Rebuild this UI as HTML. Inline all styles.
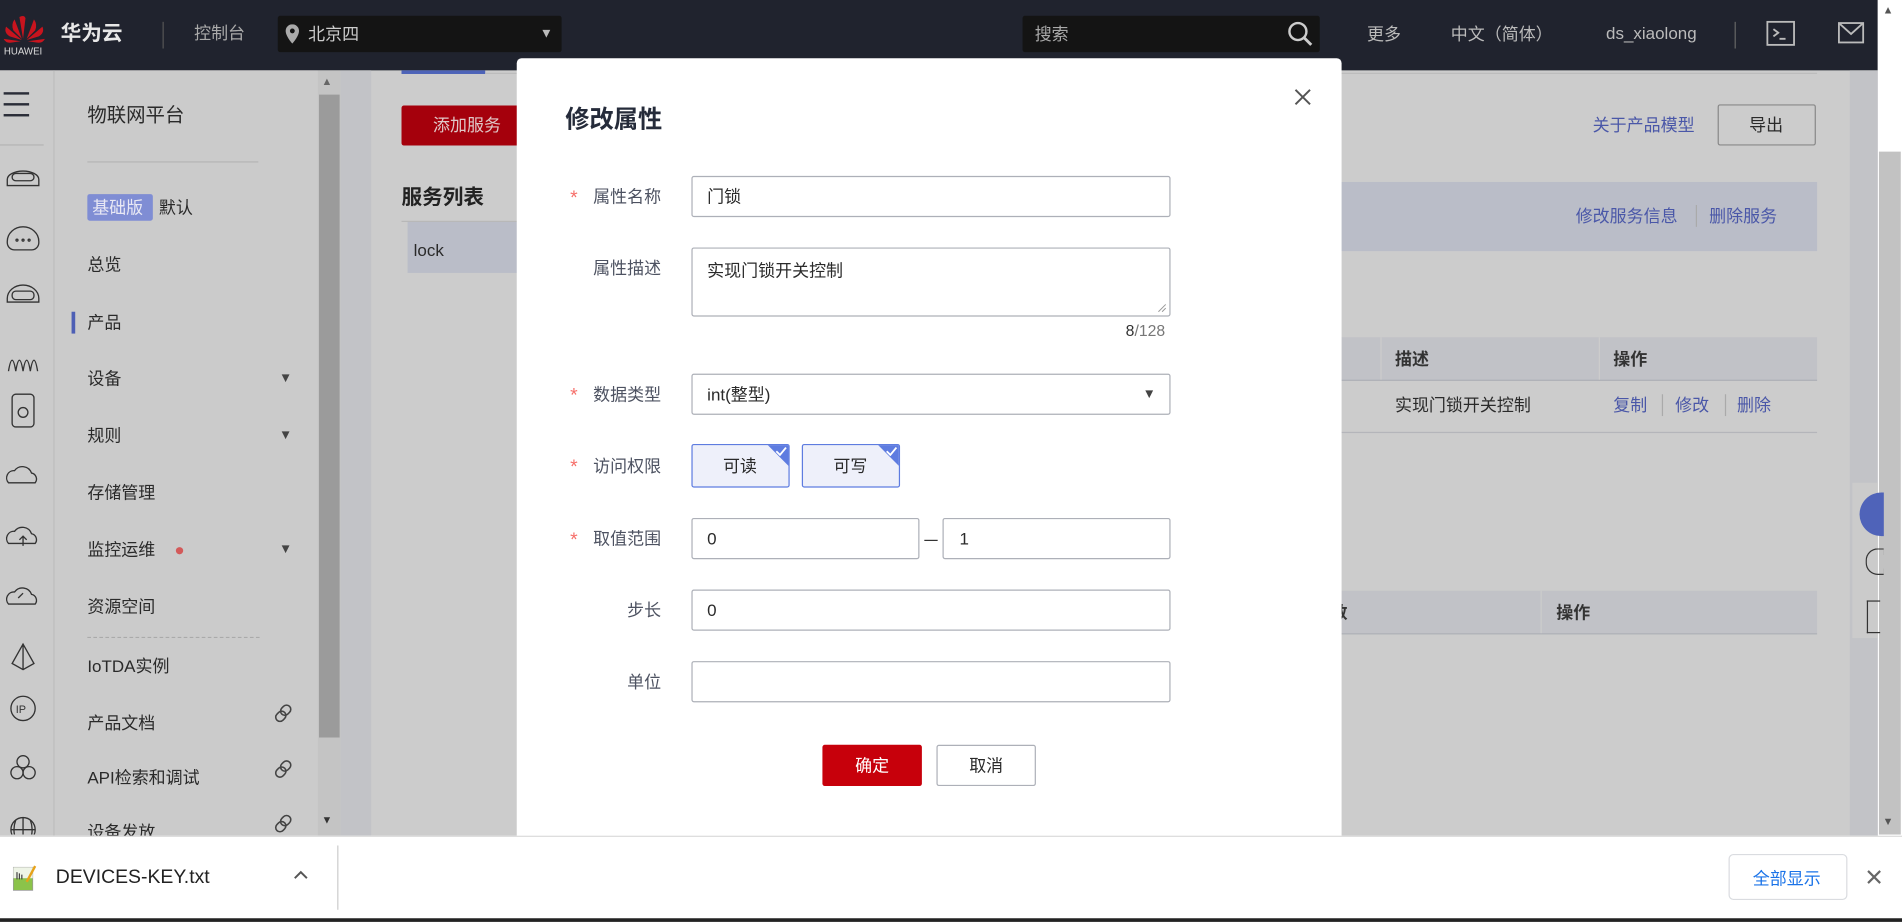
<!DOCTYPE html>
<html><head><meta charset="utf-8"><style>
html,body{margin:0;padding:0;width:1902px;height:921px;overflow:hidden;background:#ccc}
#w{position:absolute;left:0;top:0;width:1568px;height:760px;transform:scale(1.21301);transform-origin:0 0;font-family:"Liberation Sans","Noto Sans CJK SC",sans-serif;color:#2a2a2a;font-size:14px}
.a{position:absolute}
.t{position:absolute;white-space:nowrap;line-height:1}
.lnk{color:#4a57a8}
.inp{position:absolute;background:#fff;border:1px solid #adb0b8;border-radius:2px;box-sizing:border-box}
.lab{position:absolute;width:100px;left:445px;text-align:right;color:#4d5261;font-size:14px;line-height:1}
.st{position:absolute;left:470px;color:#f66f6a;font-size:16px;line-height:1}
</style></head><body><div id="w">
<!-- header -->
<div class="a" style="left:0;top:0;width:1548px;height:58px;background:#20232e"></div>
<svg class="a" style="left:0;top:10px" width="40" height="40" viewBox="0 0 40 40"><g fill="#c8141e"><path d="M18 22 L12 6 Q9 10 11 15Z"/><path d="M22 22 L28 6 Q31 10 29 15Z"/><path d="M18 23 L5 12 Q3 17 8 20Z"/><path d="M22 23 L35 12 Q37 17 32 20Z"/><path d="M19 22 L16 4 Q20 2 21 5Z"/><path d="M17 24 L3 22 Q5 26 10 25Z"/><path d="M23 24 L37 22 Q35 26 30 25Z"/></g><text x="19" y="35" font-size="8" fill="#ddd" text-anchor="middle" font-family="Liberation Sans">HUAWEI</text></svg>
<div class="t" style="left:50px;top:19px;font-size:17px;color:#e8e8e8;font-weight:bold">华为云</div>
<div class="a" style="left:134px;top:18px;width:1px;height:22px;background:#555"></div>
<div class="t" style="left:160px;top:20px;color:#aaa">控制台</div>
<div class="a" style="left:229px;top:13px;width:234px;height:30px;background:#141414;border-radius:2px"></div>
<svg class="a" style="left:235px;top:20px" width="12" height="16" viewBox="0 0 12 16"><path d="M6 0a5.5 5.5 0 0 0-5.5 5.5C.5 10 6 16 6 16s5.5-6 5.5-10.5A5.5 5.5 0 0 0 6 0z" fill="#aaa"/><circle cx="6" cy="5.5" r="2" fill="#141414"/></svg>
<div class="t" style="left:254px;top:21px;color:#ccc">北京四</div>
<div class="t" style="left:445px;top:23px;color:#bbb;font-size:11px">▼</div>
<div class="a" style="left:843px;top:13px;width:245px;height:30px;background:#141414;border-radius:2px"></div>
<div class="t" style="left:853px;top:21px;color:#aaa">搜索</div>
<svg class="a" style="left:1061px;top:17px" width="22" height="22" viewBox="0 0 22 22"><circle cx="9" cy="9" r="7" fill="none" stroke="#ccc" stroke-width="2"/><path d="M14 14l6 6" stroke="#ccc" stroke-width="2.4"/></svg>
<div class="t" style="left:1127px;top:21px;color:#bbb">更多</div>
<div class="t" style="left:1196px;top:21px;color:#bbb">中文（简体）</div>
<div class="t" style="left:1324px;top:20px;color:#bbb">ds_xiaolong</div>
<div class="a" style="left:1430px;top:18px;width:1px;height:22px;background:#666"></div>
<svg class="a" style="left:1456px;top:17px" width="24" height="22" viewBox="0 0 24 22"><rect x="1" y="1" width="22" height="19" fill="none" stroke="#bbb" stroke-width="1.5"/><path d="M6 7l4 3-4 3M11 15h5" stroke="#bbb" stroke-width="1.5" fill="none"/></svg>
<svg class="a" style="left:1515px;top:18px" width="22" height="18" viewBox="0 0 22 18"><rect x="1" y="1" width="20" height="16" fill="none" stroke="#bbb" stroke-width="1.5"/><path d="M1 1l10 9 10-9" stroke="#bbb" stroke-width="1.5" fill="none"/></svg>
<!-- right page scrollbar -->
<div class="a" style="left:1548px;top:0;width:20px;height:689px;background:#fff"></div>
<div class="a" style="left:1549px;top:125px;width:18px;height:563px;background:#c2c2c2"></div>
<div class="t" style="left:1552px;top:4px;font-size:9px;color:#555">▲</div>
<div class="t" style="left:1552px;top:673px;font-size:9px;color:#555">▼</div>
<!-- left icon column -->
<div class="a" style="left:0;top:58px;width:44px;height:631px;background:#cbcbcb;border-right:1px solid #bcbcbc"></div>
<div class="a" style="left:3px;top:76px;width:21px;height:2px;background:#2a2d38"></div>
<div class="a" style="left:3px;top:85px;width:21px;height:2px;background:#2a2d38"></div>
<div class="a" style="left:3px;top:94px;width:21px;height:2px;background:#2a2d38"></div>
<div class="a" style="left:0;top:119px;width:36px;height:1px;background:#b5b5b5"></div>
<svg class="a" style="left:3px;top:128px" width="32" height="560" viewBox="0 0 32 560" fill="none" stroke="#333" stroke-width="1.1">
<path d="M3 20a13 7 0 0 1 26 0v5H3z"/><rect x="7" y="15" width="18" height="6" rx="3"/>
<path d="M3 71a13 12 0 0 1 26 0v1a6 6 0 0 1-6 6H9a6 6 0 0 1-6-6z"/><circle cx="11" cy="70" r=".8"/><circle cx="16" cy="70" r=".8"/><circle cx="21" cy="70" r=".8"/>
<path d="M3 118a13 11 0 0 1 26 0v3H3z"/><rect x="7" y="112" width="18" height="7" rx="3"/>
<path d="M4 178q3-18 6 0q3-18 6 0q3-18 6 0q3-18 6 0"/>
<rect x="7" y="197" width="18" height="27" rx="3"/><circle cx="16" cy="212" r="4"/>
<path d="M4 270a6 6 0 0 1 5-10a8 8 0 0 1 14 2a5 5 0 0 1 3 8z"/>
<path d="M4 320a6 6 0 0 1 5-10a8 8 0 0 1 14 2a5 5 0 0 1 3 8z"/><path d="M16 322v-8m-3 3l3-3 3 3"/>
<path d="M4 370a6 6 0 0 1 5-10a8 8 0 0 1 14 2a5 5 0 0 1 3 8z"/><path d="M12 365l4-4"/>
<path d="M16 403l-9 16 9 5 9-5z M16 403v21"/>
<circle cx="16" cy="456" r="10"/><text x="10" y="460" font-size="9" fill="#333" stroke="none">IP</text>
<circle cx="16" cy="500" r="5"/><circle cx="11" cy="509" r="5"/><circle cx="21" cy="509" r="5"/>
<circle cx="16" cy="556" r="10"/><path d="M6 556h20M16 546v20M10 548q-3 8 0 16M22 548q3 8 0 16"/>
</svg>
<!-- nav -->
<div class="a" style="left:45px;top:58px;width:217px;height:631px;background:#cbcbcb"></div>
<div class="a" style="left:262px;top:58px;width:19px;height:631px;background:#c4c4c4"></div>
<div class="a" style="left:263px;top:78px;width:17px;height:530px;background:#9b9b9b"></div>
<div class="t" style="left:265px;top:63px;font-size:9px;color:#666">▲</div>
<div class="t" style="left:265px;top:672px;font-size:9px;color:#333">▼</div>
<div class="a" style="left:281px;top:58px;width:25px;height:631px;background:#c2c3c7"></div>
<div class="t" style="left:72px;top:88px;font-size:16px">物联网平台</div>
<div class="a" style="left:72px;top:133px;width:141px;height:1px;background:#b5b5b5"></div>
<div class="a" style="left:72px;top:160px;width:54px;height:22px;background:#7f8dd4;border-radius:2px"></div>
<div class="t" style="left:76px;top:164px;font-size:14px;color:#e8e8f4">基础版</div>
<div class="t" style="left:131px;top:164px">默认</div>
<div class="t" style="left:72px;top:211px">总览</div>
<div class="a" style="left:59px;top:257px;width:3px;height:18px;background:#4d5fb5"></div>
<div class="t" style="left:72px;top:259px">产品</div>
<div class="t" style="left:72px;top:305px">设备</div><div class="t" style="left:230px;top:307px;font-size:11px;color:#444">▼</div>
<div class="t" style="left:72px;top:352px">规则</div><div class="t" style="left:230px;top:354px;font-size:11px;color:#444">▼</div>
<div class="t" style="left:72px;top:399px">存储管理</div>
<div class="t" style="left:72px;top:446px">监控运维</div><div class="a" style="left:145px;top:451px;width:6px;height:6px;border-radius:50%;background:#d35a5a"></div><div class="t" style="left:230px;top:448px;font-size:11px;color:#444">▼</div>
<div class="t" style="left:72px;top:493px">资源空间</div>
<div class="a" style="left:72px;top:525px;width:142px;border-top:1px dashed #aaa"></div>
<div class="t" style="left:72px;top:542px">IoTDA实例</div>
<div class="t" style="left:72px;top:589px">产品文档</div>
<div class="t" style="left:72px;top:634px">API检索和调试</div>
<div class="t" style="left:72px;top:679px">设备发放</div>
<svg class="a" style="left:226px;top:580px" width="16" height="110" viewBox="0 0 16 110" fill="none" stroke="#444" stroke-width="1.3"><g id="lk"><rect x="6" y="1" width="7" height="9" rx="3.5" transform="rotate(45 9.5 5.5)"/><rect x="2" y="6" width="7" height="9" rx="3.5" transform="rotate(45 5.5 10.5)"/></g><use href="#lk" y="46"/><use href="#lk" y="91"/></svg>
<!-- content -->
<div class="a" style="left:331px;top:58px;width:69px;height:3px;background:#4d63b8"></div>
<div class="a" style="left:400px;top:60px;width:1098px;height:1px;background:#bcbcbc"></div>
<div class="a" style="left:331px;top:87px;width:100px;height:33px;background:#a5000c;border-radius:2px"></div>
<div class="t" style="left:357px;top:96px;color:#e0c8c8">添加服务</div>
<div class="t" style="left:331px;top:154px;font-size:17px;font-weight:bold;color:#222">服务列表</div>
<div class="a" style="left:331px;top:182px;width:100px;height:1px;background:#b8b8b8"></div>
<div class="a" style="left:336px;top:183px;width:95px;height:42px;background:#babdc8"></div>
<div class="t" style="left:341px;top:199px">lock</div>
<div class="t lnk" style="left:1313px;top:96px">关于产品模型</div>
<div class="a" style="left:1416px;top:86px;width:81px;height:34px;border:1px solid #888;border-radius:2px;box-sizing:border-box"></div>
<div class="t" style="left:1442px;top:96px">导出</div>
<div class="a" style="left:1100px;top:150px;width:398px;height:57px;background:#babdc8"></div>
<div class="t lnk" style="left:1299px;top:171px">修改服务信息</div>
<div class="a" style="left:1398px;top:169px;width:1px;height:18px;background:#aaa"></div>
<div class="t lnk" style="left:1409px;top:171px">删除服务</div>
<div class="a" style="left:1100px;top:278px;width:398px;height:35px;background:#c1c2c7;border-bottom:1px solid #aeb0b6"></div>
<div class="a" style="left:1138px;top:278px;width:1px;height:35px;background:#ccc"></div>
<div class="a" style="left:1318px;top:278px;width:1px;height:35px;background:#ccc"></div>
<div class="t" style="left:1150px;top:289px;font-weight:bold;color:#333">描述</div>
<div class="t" style="left:1330px;top:289px;font-weight:bold;color:#333">操作</div>
<div class="t" style="left:1150px;top:327px">实现门锁开关控制</div>
<div class="t lnk" style="left:1330px;top:327px">复制</div><div class="a" style="left:1370px;top:325px;width:1px;height:18px;background:#aaa"></div>
<div class="t lnk" style="left:1381px;top:327px">修改</div><div class="a" style="left:1422px;top:325px;width:1px;height:18px;background:#aaa"></div>
<div class="t lnk" style="left:1432px;top:327px">删除</div>
<div class="a" style="left:1100px;top:356px;width:398px;height:1px;background:#b4b5ba"></div>
<div class="a" style="left:1100px;top:487px;width:398px;height:35px;background:#c1c2c7;border-bottom:1px solid #aeb0b6"></div>
<div class="a" style="left:1270px;top:487px;width:1px;height:35px;background:#ccc"></div>
<div class="t" style="left:1097px;top:498px;font-weight:bold;color:#333">数</div>
<div class="t" style="left:1283px;top:498px;font-weight:bold;color:#333">操作</div>
<div class="a" style="left:1525px;top:58px;width:23px;height:631px;background:#c2c3c7"></div>
<div class="a" style="left:1527px;top:398px;width:21px;height:128px;background:#cbcbcb"></div>
<div class="a" style="left:1533px;top:406px;width:20px;height:36px;border-radius:18px 0 0 18px;background:#4f63b9"></div>
<div class="a" style="left:1538px;top:452px;width:14px;height:20px;border:1px solid #333;border-right:none;border-radius:10px 0 0 10px"></div>
<div class="a" style="left:1539px;top:495px;width:10px;height:25px;border:1px solid #333;border-right:none"></div>
<!-- modal -->
<div class="a" style="left:426px;top:48px;width:680px;height:641px;background:#fff;border-radius:4px 4px 0 0"></div>
<div class="t" style="left:466px;top:89px;font-size:20px;font-weight:bold;color:#252b3a">修改属性</div>
<svg class="a" style="left:1067px;top:73px" width="14" height="14" viewBox="0 0 14 14"><path d="M1 1l12 12M13 1L1 13" stroke="#555" stroke-width="1.6"/></svg>
<div class="st" style="top:156px">*</div><div class="lab" style="top:155px">属性名称</div>
<div class="inp" style="left:570px;top:145px;width:395px;height:34px"></div>
<div class="t" style="left:583px;top:155px">门锁</div>
<div class="lab" style="top:214px">属性描述</div>
<div class="inp" style="left:570px;top:204px;width:395px;height:57px"></div>
<div class="t" style="left:583px;top:216px">实现门锁开关控制</div>
<svg class="a" style="left:954px;top:250px" width="8" height="8"><path d="M1 7L7 1M4 7L7 4" stroke="#999" stroke-width=".8"/></svg>
<div class="t" style="left:928px;top:266px;font-size:13px;color:#777"><span style="color:#333">8</span>/128</div>
<div class="st" style="top:319px">*</div><div class="lab" style="top:318px">数据类型</div>
<div class="inp" style="left:570px;top:308px;width:395px;height:34px"></div>
<div class="t" style="left:583px;top:318px">int(整型)</div>
<div class="t" style="left:942px;top:320px;font-size:11px;color:#444">▼</div>
<div class="st" style="top:378px">*</div><div class="lab" style="top:377px">访问权限</div>
<div class="inp" style="left:570px;top:366px;width:81px;height:36px;background:#eef0fa;border-color:#5e7ce0;overflow:hidden"><div class="a" style="right:-1px;top:-1px;width:0;height:0;border-top:19px solid #5e7ce0;border-left:19px solid transparent"></div><svg class="a" style="right:1px;top:1px" width="10" height="8"><path d="M1 4l3 3L9 1" stroke="#fff" stroke-width="1.5" fill="none"/></svg></div>
<div class="t" style="left:596px;top:377px">可读</div>
<div class="inp" style="left:661px;top:366px;width:81px;height:36px;background:#eef0fa;border-color:#5e7ce0;overflow:hidden"><div class="a" style="right:-1px;top:-1px;width:0;height:0;border-top:19px solid #5e7ce0;border-left:19px solid transparent"></div><svg class="a" style="right:1px;top:1px" width="10" height="8"><path d="M1 4l3 3L9 1" stroke="#fff" stroke-width="1.5" fill="none"/></svg></div>
<div class="t" style="left:687px;top:377px">可写</div>
<div class="st" style="top:438px">*</div><div class="lab" style="top:437px">取值范围</div>
<div class="inp" style="left:570px;top:427px;width:188px;height:34px"></div>
<div class="t" style="left:583px;top:437px">0</div>
<div class="a" style="left:762px;top:445px;width:11px;height:1px;background:#333"></div>
<div class="inp" style="left:777px;top:427px;width:188px;height:34px"></div>
<div class="t" style="left:791px;top:437px">1</div>
<div class="lab" style="top:496px">步长</div>
<div class="inp" style="left:570px;top:486px;width:395px;height:34px"></div>
<div class="t" style="left:583px;top:496px">0</div>
<div class="lab" style="top:555px">单位</div>
<div class="inp" style="left:570px;top:545px;width:395px;height:34px"></div>
<div class="a" style="left:678px;top:614px;width:82px;height:34px;background:#c7000b;border-radius:2px"></div>
<div class="t" style="left:705px;top:624px;color:#fff">确定</div>
<div class="inp" style="left:772px;top:614px;width:82px;height:34px"></div>
<div class="t" style="left:799px;top:624px">取消</div>
<!-- download bar -->
<div class="a" style="left:0;top:689px;width:1568px;height:71px;background:#fff;border-top:1px solid #ddd;box-sizing:border-box"></div>
<svg class="a" style="left:10px;top:713px" width="20" height="22" viewBox="0 0 20 22"><rect x="1" y="2" width="16" height="19" fill="#8bc34a" stroke="#999" stroke-width=".6"/><rect x="1" y="2" width="16" height="9" fill="#eef4e6"/><path d="M4 6v6M6 7v5M8 8v4" stroke="#444"/><path d="M12 14L19 1" stroke="#e6a21a" stroke-width="2"/></svg>
<div class="t" style="left:46px;top:716px;font-size:16px;color:#222">DEVICES-KEY.txt</div>
<svg class="a" style="left:242px;top:717px" width="12" height="8"><path d="M1 7l5-5 5 5" stroke="#555" stroke-width="1.6" fill="none"/></svg>
<div class="a" style="left:278px;top:697px;width:1px;height:53px;background:#ccc"></div>
<div class="a" style="left:1425px;top:704px;width:98px;height:38px;border:1px solid #dadce0;border-radius:4px;box-sizing:border-box"></div>
<div class="t" style="left:1445px;top:717px;color:#1a73e8">全部显示</div>
<svg class="a" style="left:1539px;top:717px" width="12" height="12"><path d="M1 1l10 10M11 1L1 11" stroke="#666" stroke-width="1.8"/></svg>
<div class="a" style="left:0;top:757px;width:1568px;height:3px;background:#222"></div>
</div></body></html>
